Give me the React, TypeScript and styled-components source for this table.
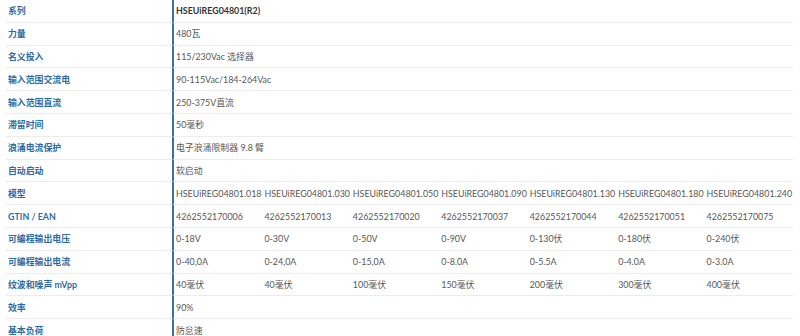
import { FC } from 'react';
import styled, { createGlobalStyle } from 'styled-components';

const GlobalStyle = createGlobalStyle`
  html, body {
    margin: 0;
    padding: 0;
    background: #fff;
  }
  body {
    font-family: Lato, 'Noto Sans CJK SC', sans-serif;
    font-size: 8.9px;
  }
`;

const SpecTable = styled.div`
  width: 787px;
  margin-left: 6px;
`;

const Row = styled.div`
  display: grid;
  grid-template-columns: 166px 1fr;
  height: 22.8px;
`;

const Label = styled.div`
  display: flex;
  align-items: center;
  padding-left: 2px;
  border-bottom: 1px solid #ececec;
  color: #2d6ba3;
  font-weight: 700;
  white-space: nowrap;
`;

const Values = styled.div`
  display: grid;
  grid-template-columns: repeat(7, 1fr);
  border-left: 2px solid #3f72a2;
  border-bottom: 1px solid #ececec;
`;

const Value = styled.div<{ $wide?: boolean; $strong?: boolean }>`
  display: flex;
  align-items: center;
  padding-left: 2px;
  white-space: nowrap;
  color: ${({ $strong }) => ($strong ? '#333' : '#575757')};
  font-weight: ${({ $strong }) => ($strong ? 700 : 400)};
  ${({ $wide }) => $wide && 'grid-column: 1 / -1;'}
`;

type Spec = {
  label: string;
  values: string[];
  strong?: boolean;
};

const specs: Spec[] = [
  { label: '系列', values: ['HSEUiREG04801(R2)'], strong: true },
  { label: '力量', values: ['480瓦'] },
  { label: '名义投入', values: ['115/230Vac 选择器'] },
  { label: '输入范围交流电', values: ['90-115Vac/184-264Vac'] },
  { label: '输入范围直流', values: ['250-375V直流'] },
  { label: '滞留时间', values: ['50毫秒'] },
  { label: '浪涌电流保护', values: ['电子浪涌限制器 9.8 臂'] },
  { label: '自动启动', values: ['软启动'] },
  {
    label: '模型',
    values: ['018', '030', '050', '090', '130', '180', '240'].map(
      (s) => `HSEUiREG04801.${s}`
    ),
  },
  {
    label: 'GTIN / EAN',
    values: ['0006', '0013', '0020', '0037', '0044', '0051', '0075'].map(
      (s) => `426255217${s}`
    ),
  },
  {
    label: '可编程输出电压',
    values: ['0-18V', '0-30V', '0-50V', '0-90V', '0-130伏', '0-180伏', '0-240伏'],
  },
  {
    label: '可编程输出电流',
    values: ['0-40,0A', '0-24,0A', '0-15,0A', '0-8.0A', '0-5.5A', '0-4.0A', '0-3.0A'],
  },
  {
    label: '纹波和噪声 mVpp',
    values: ['40毫伏', '40毫伏', '100毫伏', '150毫伏', '200毫伏', '300毫伏', '400毫伏'],
  },
  { label: '效率', values: ['90%'] },
  { label: '基本负荷', values: ['防怠速'] },
];

const App: FC = () => (
  <>
    <GlobalStyle />
    <SpecTable>
      {specs.map((spec) => (
        <Row key={spec.label}>
          <Label>{spec.label}</Label>
          <Values>
            {spec.values.map((v, i) => (
              <Value key={i} $wide={spec.values.length === 1} $strong={spec.strong}>
                {v}
              </Value>
            ))}
          </Values>
        </Row>
      ))}
    </SpecTable>
  </>
);

export default App;
